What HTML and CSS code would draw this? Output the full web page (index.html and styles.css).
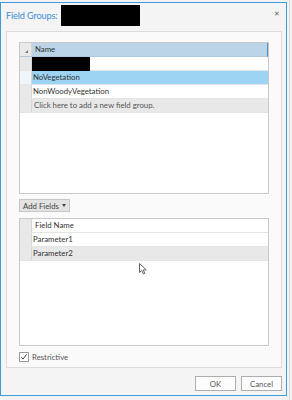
FILE: index.html
```html
<!DOCTYPE html>
<html lang="en">
<head>
    <meta charset="UTF-8">
    <title>Field Groups</title>
    <link rel="stylesheet" href="styles.css">
</head>
<body>
    <div class="dialog">
        <div class="titlebar">
            <span class="title">Field Groups:</span>
            <span class="redact redact-title"></span>
            <span class="close">&#x2715;</span>
        </div>

        <div class="panel">
            <div class="grid grid-groups">
                <div class="row head">
                    <div class="sel"><span class="corner"></span></div>
                    <div class="cell">Name</div>
                </div>
                <div class="row">
                    <div class="sel"></div>
                    <div class="cell"></div>
                    <span class="redact redact-row"></span>
                </div>
                <div class="row selected">
                    <div class="sel"></div>
                    <div class="cell">NoVegetation</div>
                </div>
                <div class="row">
                    <div class="sel"></div>
                    <div class="cell">NonWoodyVegetation</div>
                </div>
                <div class="row newrow">
                    <div class="sel"></div>
                    <div class="cell">Click here to add a new field group.</div>
                </div>
            </div>

            <div class="toolbar">
                <button class="addbtn">Add Fields <span class="caret"></span></button>
            </div>

            <div class="grid grid-fields">
                <div class="row head2">
                    <div class="sel"></div>
                    <div class="cell">Field Name</div>
                </div>
                <div class="row">
                    <div class="sel"></div>
                    <div class="cell">Parameter1</div>
                </div>
                <div class="row alt">
                    <div class="sel"></div>
                    <div class="cell">Parameter2</div>
                </div>
                <svg class="cursor" width="8" height="12" viewBox="0 0 8 12">
                    <path d="M0.5 0.5 L0.5 9.5 L2.8 7.4 L4.4 11 L5.8 10.4 L4.3 6.9 L7.3 6.9 Z" fill="#fff" stroke="#666" stroke-width="1"/>
                </svg>
            </div>

            <label class="check">
                <span class="box">
                    <svg width="8" height="8" viewBox="0 0 8 8"><path d="M1.4 4.2 L3.1 6.1 L6.6 1.2" fill="none" stroke="#444" stroke-width="1"/></svg>
                </span>
                Restrictive
            </label>
        </div>

        <div class="footer">
            <button class="btn">OK</button>
            <button class="btn">Cancel</button>
        </div>
    </div>
    <div class="backdrop-edge"></div>
</body>
</html>
```

FILE: styles.css
```css
body{
    margin: 0;
    background: #f3f3f3;
    font-family: Lato, "Open Sans", sans-serif;
    font-size: 7.8px;
    color: #333;
    width: 292px;
    height: 400px;
    overflow: hidden;
    position: relative;
}

.dialog{
    margin-top: 2px;
    width: 285px;
    height: 392px;
    background: #f4f4f4;
    border: 1px solid #3f9ad8;
    display: flex;
    flex-direction: column;
    position: relative;
}

/* bit of the window behind the dialog */
.backdrop-edge{
    position: absolute;
    left: 289px;
    top: 0;
    width: 1px;
    height: 400px;
    background: #dadada;
}

.titlebar{
    height: 28px;
    display: flex;
    align-items: center;
    padding: 0 5px;
    position: relative;
}
.title{
    color: #3d8fd6;
    font-size: 9.2px;
    letter-spacing: -0.15px;
    margin-top: -3px;
}
.close{
    margin-left: auto;
    font-size: 7px;
    color: #666;
    margin-top: -8px;
    margin-right: 1px;
}

.redact{
    position: absolute;
    background: #000;
}
.redact-title{
    left: 60px;
    top: 2px;
    width: 79px;
    height: 21px;
}
.redact-row{
    left: 12px;
    top: 0;
    width: 58px;
    height: 19px;
}

.panel{
    box-sizing: border-box;
    margin: 0 4px 0 5px;
    height: 337px;
    border: 1px solid #dcdcdc;
    background: #fafafa;
    padding: 10px 12px 0 12px;
    display: flex;
    flex-direction: column;
}

.grid{
    background: #fff;
    border: 1px solid #c9c9c9;
    position: relative;
}
.grid-groups{
    height: 150px;
}
.grid-fields{
    height: 126px;
}

.row{
    display: flex;
    height: 13px;
    border-bottom: 1px solid #e4e4e4;
    position: relative;
}
.sel{
    width: 11px;
    background: #e8e8e8;
    border-right: 1px solid #d6d6d6;
    position: relative;
}
.cell{
    flex: 1;
    padding-left: 1px;
    line-height: 13px;
    white-space: nowrap;
}

.head{
    background: #bcd4e8;
    border-bottom: 1px solid #b0c8dc;
    border-right: 1px solid #4f8fc8;
}
.head .sel{
    background: #eaeaea;
}
.corner{
    position: absolute;
    right: 3px;
    bottom: 3px;
    width: 0;
    height: 0;
    border-left: 3px solid transparent;
    border-bottom: 3px solid #777;
}
.head .cell{
    padding-left: 3px;
}

.selected .cell{
    background: #9dd4f3;
}
.selected .sel{
    background: #eef5fb;
}
.newrow{
    background: #e8e8e8;
    color: #555;
}
.newrow .cell{
    padding-left: 2px;
}

.head2 .cell{
    padding-left: 3px;
}
.alt{
    background: #e8e8e8;
}

.cursor{
    position: absolute;
    left: 119px;
    top: 44px;
}

.toolbar{
    padding: 5px 0 6px 0;
}
.addbtn{
    font-family: inherit;
    font-size: 7.8px;
    color: #444;
    height: 13px;
    padding: 0 3px;
    background: #e3e3e3;
    border: 1px solid #c6c6c6;
    display: flex;
    align-items: center;
    gap: 3px;
}
.caret{
    width: 0;
    height: 0;
    border-left: 2.5px solid transparent;
    border-right: 2.5px solid transparent;
    border-top: 3px solid #444;
}

.check{
    display: flex;
    align-items: center;
    gap: 3px;
    margin-top: 6px;
    color: #555;
}
.box{
    width: 8px;
    height: 8px;
    border: 1px solid #9a9a9a;
    background: #fff;
    display: flex;
}

.footer{
    display: flex;
    justify-content: flex-end;
    gap: 5px;
    padding: 8px 4px 0 0;
}
.btn{
    font-family: inherit;
    font-size: 7.8px;
    color: #555;
    width: 41px;
    height: 15px;
    padding: 0;
    background: #fdfdfd;
    border: 1px solid #adadad;
}
```
